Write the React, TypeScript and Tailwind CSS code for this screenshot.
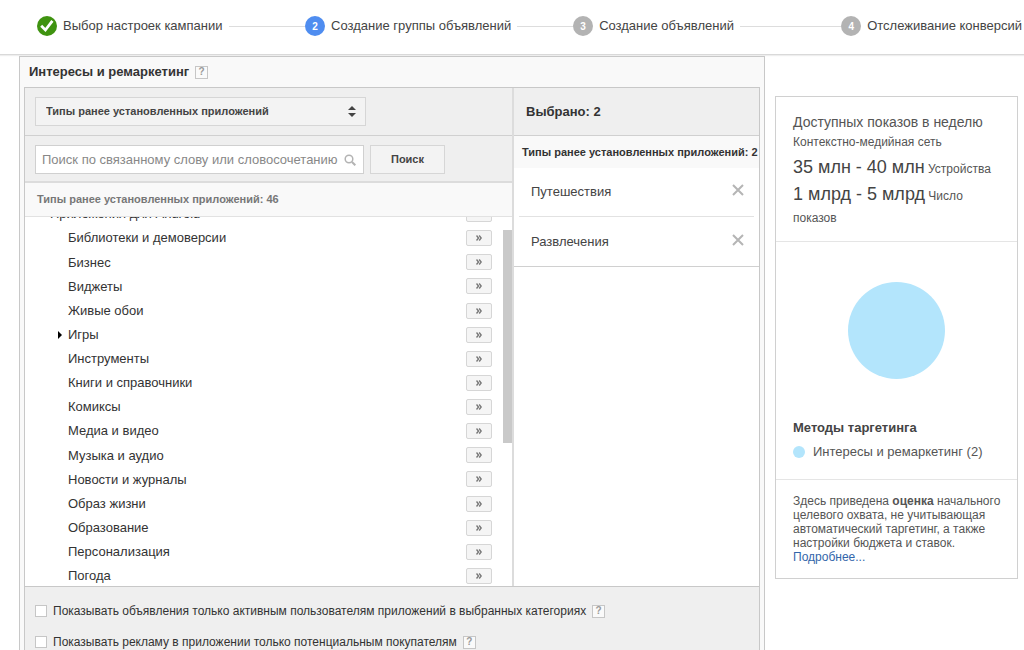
import React, { useState } from 'react';

interface Step {
  label: string;
  state: 'done' | 'current' | 'pending';
}

const steps: Step[] = [
  { label: 'Выбор настроек кампании', state: 'done' },
  { label: 'Создание группы объявлений', state: 'current' },
  { label: 'Создание объявлений', state: 'pending' },
  { label: 'Отслеживание конверсий', state: 'pending' },
];

const categories = [
  'Библиотеки и демоверсии',
  'Бизнес',
  'Виджеты',
  'Живые обои',
  'Игры',
  'Инструменты',
  'Книги и справочники',
  'Комиксы',
  'Медиа и видео',
  'Музыка и аудио',
  'Новости и журналы',
  'Образ жизни',
  'Образование',
  'Персонализация',
  'Погода',
];

const options = [
  { id: 'active', label: 'Показывать объявления только активным пользователям приложений в выбранных категориях' },
  { id: 'buyers', label: 'Показывать рекламу в приложении только потенциальным покупателям' },
];

const StepBadge = ({ step, index }: { step: Step; index: number }) => {
  if (step.state === 'done') {
    return (
      <svg viewBox="0 0 20 20" className="size-5 shrink-0" aria-hidden="true">
        <circle cx="10" cy="10" r="10" fill="#3f9310" />
        <path d="M4.2 9.8l4.2 4.2 7-9.2" fill="none" stroke="#fff" strokeWidth="2.8" />
      </svg>
    );
  }
  return (
    <span
      className={`flex size-5 shrink-0 items-center justify-center rounded-full text-[10px] font-bold text-white ${
        step.state === 'current' ? 'bg-[#4f8df0]' : 'bg-[#b3b3b3]'
      }`}
    >
      {index + 1}
    </span>
  );
};

const HelpButton = () => (
  <button
    type="button"
    aria-label="Справка"
    className="flex size-[13px] shrink-0 items-center justify-center border border-[#c6c6c6] bg-[#fafafa] text-[10px] leading-none font-bold text-[#999]"
  >
    ?
  </button>
);

const AddButton = ({ name }: { name: string }) => (
  <button
    type="button"
    aria-label={`Добавить: ${name}`}
    className="flex h-4 w-[26px] items-center justify-center rounded-xs border border-[#d6d6d6] bg-[#f5f5f5] text-[#777]"
  >
    <svg viewBox="0 0 6 6" className="size-1.5" fill="none" stroke="currentColor" strokeWidth="1.4" aria-hidden="true">
      <path d="M.5.5L2.5 3 .5 5.5M3.2.5l2 2.5-2 2.5" />
    </svg>
  </button>
);

const App: React.FC = () => {
  const [selected, setSelected] = useState(['Путешествия', 'Развлечения']);
  const [query, setQuery] = useState('');

  return (
    <div className="flex min-h-screen flex-col bg-white font-['Liberation_Sans',Arial,sans-serif] text-[13px] text-[#444]">
      <header className="border-b border-[#d9d9d9] shadow-[0_1px_1px_#eee]">
        <ol className="flex h-[54px] items-center pr-0.5 pb-0.5 pl-[37px]">
          {steps.map((step, index) => {
            const isLast = index === steps.length - 1;
            return (
              <li key={step.label} className={`flex items-center whitespace-nowrap ${isLast ? 'shrink-0' : 'flex-1'}`}>
                <StepBadge step={step} index={index} />
                <span className="ml-1.5">{step.label}</span>
                {!isLast && <span className="ml-1.5 h-px flex-1 bg-[#ddd]"></span>}
              </li>
            );
          })}
        </ol>
      </header>

      <main className="flex flex-1 items-stretch pt-px pr-1.5 pl-[19px]">
        <section className="flex min-w-0 flex-1 flex-col border-x border-t border-[#c8c8c8] bg-[#f9f9f9] px-1">
          <div className="flex h-[30px] items-center gap-1.5 pl-[5px]">
            <h1 className="text-[13px] font-bold text-[#333]">Интересы и ремаркетинг</h1>
            <HelpButton />
          </div>

          <div className="flex flex-1 flex-col border-x border-t border-[#c8c8c8] bg-[#efefef]">
            <div className="flex border-b border-[#c8c8c8]">
              <div className="min-w-0 flex-1 border-r-2 border-[#dcdcdc]">
                <div className="flex h-12 items-center border-b border-[#d0d0d0] pl-2.5">
                  <div className="relative w-[331px]">
                    <select
                      aria-label="Категория"
                      className="h-[29px] w-full appearance-none border border-[#d6d6d6] bg-[#f3f3f3] pl-2.5 text-[11px] font-bold text-[#444]"
                    >
                      <option>Типы ранее установленных приложений</option>
                    </select>
                    <svg viewBox="0 0 8 11" className="pointer-events-none absolute top-[9px] right-2.5 h-[11px] w-2" fill="#444" aria-hidden="true">
                      <path d="M4 0l4 4H0zM4 11l4-4H0z" />
                    </svg>
                  </div>
                </div>

                <form
                  className="flex h-[47px] items-center gap-1.5 border-b-2 border-[#dcdcdc] pt-0.5 pl-2.5"
                  onSubmit={(e) => e.preventDefault()}
                >
                  <div className="relative w-[329px]">
                    <input
                      type="text"
                      value={query}
                      onChange={(e) => setQuery(e.target.value)}
                      aria-label="Поиск"
                      placeholder="Поиск по связанному слову или словосочетанию"
                      className="h-[29px] w-full border border-[#d0d0d0] bg-white pr-5 pl-1.5 text-[13px] placeholder:text-[#888]"
                    />
                    <svg viewBox="0 0 12 12" className="pointer-events-none absolute top-[9px] right-2 size-3" fill="none" stroke="#b3b3b3" aria-hidden="true">
                      <circle cx="5" cy="5" r="3.8" strokeWidth="1.5" />
                      <path d="M8 8l3.3 3.3" strokeWidth="2" />
                    </svg>
                  </div>
                  <button type="submit" className="h-[29px] w-[75px] border border-[#d6d6d6] bg-[#f3f3f3] text-[11px] font-bold text-[#444]">
                    Поиск
                  </button>
                </form>

                <div className="flex h-[34px] items-center border-b border-[#e2e2e2] bg-[#f9f9f9] pl-3 text-[11px] font-bold text-[#777]">
                  Типы ранее установленных приложений: 46
                </div>

                <div className="relative h-[369px] overflow-hidden bg-white">
                  {/* list is scrolled a little past the parent row */}
                  <ul className="-mt-[15px] flex h-[386px] flex-col justify-between pr-5 text-[#333]">
                    <li className="flex h-6 items-center justify-between pl-[25px]">
                      Приложения для Android
                      <AddButton name="Приложения для Android" />
                    </li>
                    {categories.map((name) => (
                      <li key={name} className="flex h-6 items-center pl-[33px]">
                        <span className="w-2.5">
                          {name === 'Игры' && (
                            <svg viewBox="0 0 4 8" className="h-2 w-1" fill="#000" aria-hidden="true">
                              <path d="M0 0l4 4-4 4z" />
                            </svg>
                          )}
                        </span>
                        <span className="flex-1">{name}</span>
                        <AddButton name={name} />
                      </li>
                    ))}
                  </ul>
                  <div className="absolute top-[13px] right-0 h-[213px] w-[9px] bg-[#c9c9c9]"></div>
                </div>
              </div>

              <div className="w-[245px] shrink-0 bg-white">
                <h2 className="flex h-12 items-center border-b border-[#d0d0d0] bg-[#efefef] pl-3 text-[13px] font-bold text-[#333]">
                  Выбрано: {selected.length}
                </h2>
                <h3 className="flex h-8 items-center bg-[#f9f9f9] pl-2 text-[11px] font-bold whitespace-nowrap text-[#333]">
                  Типы ранее установленных приложений: {selected.length}
                </h3>
                <ul className="divide-y divide-[#e2e2e2] border-b border-[#d0d0d0] px-[5px]">
                  {selected.map((name) => (
                    <li key={name} className="flex h-[49px] items-center justify-between pr-2.5 pl-3">
                      {name}
                      <button
                        type="button"
                        aria-label={`Удалить: ${name}`}
                        className="pb-1"
                        onClick={() => setSelected(selected.filter((item) => item !== name))}
                      >
                        <svg viewBox="0 0 12 12" className="size-3" stroke="#b5b5b5" strokeWidth="2" aria-hidden="true">
                          <path d="M1 1l10 10M11 1L1 11" />
                        </svg>
                      </button>
                    </li>
                  ))}
                </ul>
              </div>
            </div>

            <div className="flex flex-col gap-[15px] pt-4 pl-2.5">
              {options.map((option) => (
                <div key={option.id} className="flex h-4 items-center gap-1.5">
                  <input
                    id={option.id}
                    type="checkbox"
                    className="size-3 shrink-0 appearance-none border border-[#c6c6c6] bg-white checked:bg-[#4f8df0]"
                  />
                  <label htmlFor={option.id} className="text-xs whitespace-nowrap text-[#333]">
                    {option.label}
                  </label>
                  <HelpButton />
                </div>
              ))}
            </div>
          </div>
        </section>

        <aside className="mt-10 ml-2.5 w-[243px] shrink-0 self-start border border-[#d0d0d0] text-[#555]">
          <div className="h-[145px] border-b border-[#e5e5e5] px-[17px] pt-[15px]">
            <h2 className="text-sm leading-5">Доступных показов в неделю</h2>
            <p className="mb-0.5 text-xs leading-5">Контекстно-медийная сеть</p>
            <p className="text-xs leading-5">
              <span className="text-lg leading-[27px] text-[#444]">35 млн - 40 млн</span> Устройства
            </p>
            <p className="text-xs leading-5">
              <span className="text-lg leading-[27px] text-[#444]">1 млрд - 5 млрд</span> Число показов
            </p>
          </div>

          <div className="border-b border-[#e5e5e5] px-[17px] pt-10 pb-[15px]">
            <svg viewBox="0 0 97 97" className="mx-auto size-[97px]" role="img" aria-label="Методы таргетинга">
              <circle cx="48.5" cy="48.5" r="48.5" fill="#b3e5fc" />
            </svg>
            <h3 className="mt-[37px] text-[13px] leading-6 font-bold text-[#444]">Методы таргетинга</h3>
            <p className="flex items-center gap-2 leading-6">
              <span className="size-3 rounded-full bg-[#b3e5fc]"></span>
              Интересы и ремаркетинг (2)
            </p>
          </div>

          <p className="py-3.5 pr-2 pl-[17px] text-xs leading-[14px]">
            Здесь приведена <b>оценка</b> начального целевого охвата, не учитывающая автоматический таргетинг, а также
            настройки бюджета и ставок.{' '}
            <a href="#more" className="block text-[#3366aa]">
              Подробнее...
            </a>
          </p>
        </aside>
      </main>
    </div>
  );
};

export default App;
